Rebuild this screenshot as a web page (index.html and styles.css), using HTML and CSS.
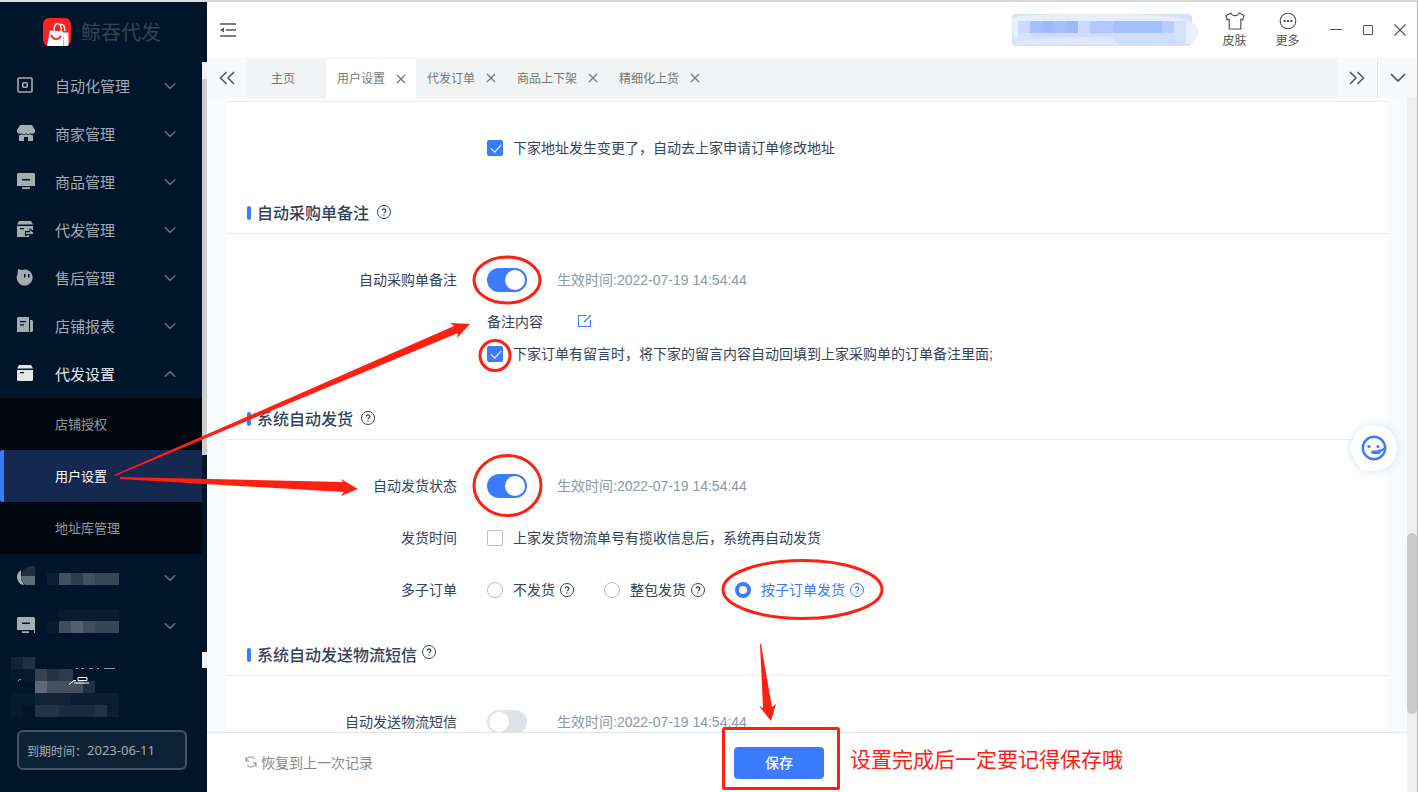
FILE: index.html
```html
<!DOCTYPE html>
<html lang="zh-CN">
<head>
<meta charset="utf-8">
<meta name="viewport" content="width=device-width, initial-scale=1">
<title>用户设置</title>
<link rel="stylesheet" href="styles.css">
</head>
<body>
<svg class="defs" aria-hidden="true">
  <symbol id="help" viewBox="0 0 14 14"><circle cx="7" cy="7" r="6.5" fill="none" stroke="currentColor"/><path d="M5.2 5.6a1.8 1.8 0 1 1 2.6 1.6c-.6.3-.8.6-.8 1.1" fill="none" stroke="currentColor" stroke-width="1.2"/><rect x="6.4" y="9.4" width="1.2" height="1.2" fill="currentColor"/></symbol>
  <symbol id="down" viewBox="0 0 12 12"><path d="M.8 3.2 6 8.4l5.200-5.200" fill="none" stroke="currentColor" stroke-width="1.6"/></symbol>
  <symbol id="close" viewBox="0 0 10 10"><path d="M1 1l8 8M9 1 1 9" fill="none" stroke="currentColor" stroke-width="1.300"/></symbol>
</svg>

<div class="app">
  <aside class="sidebar">
    <div class="brand">
      <svg width="28" height="28" viewBox="0 0 28 28" aria-hidden="true">
        <rect width="28" height="28" rx="6" fill="#ff2020"/>
        <path d="M20 14.500h5.500v11.700a4 4 0 0 1-1 1.800H21z" fill="#fff"/>
        <path d="M7 12.500 20 13.600 20.500 28H4z" fill="#fff"/>
        <path d="M11 13.500c0-5 1.500-8 4-8s3.500 3 3.300 8.500M16.500 7.500c2-2.500 5.500-1 5.200 5.500" fill="none" stroke="#fff" stroke-width="1.300"/>
        <path d="M8.500 17.500c1.500 4.500 7 4.800 9 .8" fill="none" stroke="#ff2020" stroke-width="1.800" stroke-linecap="round"/>
      </svg>
      <span class="brand-name">鲸吞代发</span>
    </div>
    <div class="menu-area">
      <nav class="menu">
        <button class="item" type="button">
          <svg class="ico" viewBox="0 0 18 18"><rect x="1" y="1" width="14" height="14" rx="1" fill="none" stroke="currentColor" stroke-width="1.600"/><rect x="5.800" y="5.800" width="4.400" height="4.400" rx="1" fill="none" stroke="currentColor" stroke-width="1.600"/></svg>
          <span>自动化管理</span><svg class="arrow"><use href="#down"/></svg>
        </button>
        <button class="item" type="button">
          <svg class="ico" viewBox="0 0 18 18"><path d="M3 0h12l3 5v2a3 3 0 0 1-4.500 1.200A3 3 0 0 1 9 8.200a3 3 0 0 1-4.500 0A3 3 0 0 1 0 7V5z" fill="currentColor"/><path d="M2 10.200q1.500 0 2.600-1 1.900 1.600 4.400 0 2.500 1.600 4.400 0 1.100 1 2.600 1V16h-5v-4H7v4H2z" fill="currentColor"/></svg>
          <span>商家管理</span><svg class="arrow"><use href="#down"/></svg>
        </button>
        <button class="item" type="button">
          <svg class="ico" viewBox="0 0 18 18"><path d="M1 0h16l1 1v12H0V1zM5 6v1.500h8V6zM5 14.200h8V16H5z" fill="currentColor" fill-rule="evenodd"/></svg>
          <span>商品管理</span><svg class="arrow"><use href="#down"/></svg>
        </button>
        <button class="item" type="button">
          <svg class="ico" viewBox="0 0 18 18"><path d="M2 0h12l2 3.500H0z" fill="currentColor"/><path d="M0 5h16v4.500L12.500 7v3H8v5h3v1H0zM3 7v1.200h4V7z" fill="currentColor" fill-rule="evenodd"/><path d="M9 11.200h4V9l3.500 3-1 1H9zM16 14.500h-4v2L9 14z" fill="currentColor"/></svg>
          <span>代发管理</span><svg class="arrow"><use href="#down"/></svg>
        </button>
        <button class="item" type="button">
          <svg class="ico" viewBox="0 0 18 18"><path d="M1 0l4 1a8 8 0 1 1-4.500 4zM7 5v3.500h1.500V5zM11 5v3.500h1.500V5z" fill="currentColor" fill-rule="evenodd"/></svg>
          <span>售后管理</span><svg class="arrow"><use href="#down"/></svg>
        </button>
        <button class="item" type="button">
          <svg class="ico" viewBox="0 0 18 18"><path d="M1 0h11v15H0V1zM3 4v1.200h6V4zM3 7.200v1.200h4V7.200zM13 3h2l1 1v10l-1 1h-2z" fill="currentColor" fill-rule="evenodd"/></svg>
          <span>店铺报表</span><svg class="arrow"><use href="#down"/></svg>
        </button>
        <button class="item open" type="button" aria-expanded="true">
          <svg class="ico" viewBox="0 0 18 18"><path d="M2 0h12l2 3.500H0zM0 5h16v10l-1 1H1l-1-1zM3 7v1.200h4V7z" fill="currentColor" fill-rule="evenodd"/></svg>
          <span>代发设置</span><svg class="arrow up"><use href="#down"/></svg>
        </button>
        <div class="submenu">
          <a href="#shop">店铺授权</a>
          <a href="#user" class="current">用户设置</a>
          <a href="#address">地址库管理</a>
        </div>
        <button class="item masked" type="button" aria-label="菜单">
          <svg class="ico" viewBox="0 0 18 18"><path d="M4 1Q-2 5 1 12q2 4 6 4L4 10z" fill="#a3abb3"/><path d="M4 7h14v9H8Q4 13 4 7" fill="#5e6b78"/><path d="M4 7Q5-1 13-3h5V7z" fill="#1d2f40"/></svg>
          <svg class="mosaic" viewBox="0 0 72 24" shape-rendering="crispEdges"><path fill="#0a1f33" d="M0 7h12v12H0z"/><path fill="#42505f" d="M12 7h12v12H12zM36 7h12v12H36z"/><path fill="#2c3b4d" d="M24 7h12v12H24z"/><path fill="#384756" d="M48 7h24v12H48z"/></svg>
          <svg class="arrow"><use href="#down"/></svg>
        </button>
        <button class="item masked" type="button" aria-label="菜单">
          <svg class="ico" viewBox="0 0 18 18"><path d="M1 0h16l1 1v15h-1v-3H0V1zM5 5.500v1.500h8V5.500zM5 14.200h7V16H5z" fill="#a3abb3" fill-rule="evenodd"/></svg>
          <svg class="mosaic" viewBox="0 0 72 24" shape-rendering="crispEdges"><path fill="#081b2e" d="M12-5h60V7H12zM0 7h12v12H0z"/><path fill="#3f4d5c" d="M12 7h12v12H12zM36 7h12v12H36z"/><path fill="#535f70" d="M24 7h12v12H24z"/><path fill="#374656" d="M48 7h24v12H48z"/></svg>
          <svg class="arrow"><use href="#down"/></svg>
        </button>
      </nav>
      <div class="side-scroll"><i></i></div>
    </div>
    <svg class="account" viewBox="0 0 120 80" aria-hidden="true">
      <g shape-rendering="crispEdges">
        <path fill="#112436" d="M11 7h12v12H11z"/><path fill="#203142" d="M23 7h12v12H23z"/>
        <path fill="#051a2d" d="M11 19h24v12H11zM11 43h24v12H11zM11 55h12v12H11z"/>
        <path fill="#354454" d="M35 19h12v12H35z"/><path fill="#223445" d="M47 19h12v12H47z"/><path fill="#2b3b4c" d="M59 19h14v12H59z"/>
        <path fill="#5e6a77" d="M35 31h12v12H35z"/><path fill="#435060" d="M47 31h36v12H47z"/><path fill="#1f3042" d="M83 31h12v12H83z"/>
        <path fill="#122436" d="M35 43h36v12H35z"/><path fill="#0a1d31" d="M71 43h48v12H71z"/>
        <path fill="#223344" d="M35 55h24v12H35z"/><path fill="#182b3b" d="M59 55h36v12H59z"/><path fill="#223144" d="M95 55h12v12H95z"/><path fill="#0a1d31" d="M107 55h12v12h-12z"/>
      </g>
      <path d="M76 18.500h2M81 18.500h3M89 18.500h4M97 18.500h2M104 18.500h11M18 31.500l1-2h2" stroke="#8a949d" fill="none"/>
      <path d="M69 34.500l5-4h2M78 27.500h9v3h-9zM74 33h15" stroke="#fff" fill="none"/>
    </svg>
    <div class="expiry">到期时间：<span>2023-06-11</span></div>
  </aside>

  <div class="main">
    <header class="topbar">
      <button class="plain" type="button" aria-label="收起菜单"><svg width="16" height="14" viewBox="0 0 16 14"><path d="M0 1h16M6 7h10M0 13h16" stroke="#555" stroke-width="1.400"/><path d="M0 7l4-2.500v5z" fill="#555"/></svg></button>
      <div class="top-right">
        <svg class="account-blur" viewBox="0 0 188 32" aria-hidden="true">
          <rect x="1" width="180" height="32" rx="4" fill="#d5e2fe"/>
          <path d="M0 12Q0 2 10 2Q90-3 150 2Q188 4 187 18Q186 30 175 30V7H7v18Q0 22 0 12" fill="#e7effe"/>
          <path d="M2 27Q40 23 100 23l8 8H6z" fill="#dfe9fe"/>
          <g shape-rendering="crispEdges"><path fill="#cbdafe" d="M7 7h12v12H7zM67 7h12v12H67z"/><path fill="#a5c0fe" d="M19 7h48v12H19z"/><path fill="#9dbafe" d="M31 7h12v12H31zM55 7h12v12H55z"/><path fill="#b0c8fe" d="M79 7h24v12H79z"/><path fill="#a5c0fe" d="M103 7h48v12h-48z"/><path fill="#b9cefe" d="M151 7h12v12h-12z"/><path fill="#d0defe" d="M19 19h60v4H19zM79 19h84v11h-55l-8-7H79z"/></g>
        </svg>
        <button class="tool" type="button"><svg width="20" height="18" viewBox="0 0 20 18"><path d="M6 1 1 3.500 2.200 8l2-.8V17h11.600V7.200l2 .8L19 3.500 14 1c-.5 3.500-7.500 3.500-8 0z" fill="none" stroke="#555" stroke-width="1.200" stroke-linejoin="round"/></svg>皮肤</button>
        <button class="tool" type="button"><svg width="20" height="18" viewBox="0 0 20 18"><circle cx="10" cy="9" r="7.800" fill="none" stroke="#555" stroke-width="1.100"/><path d="M5.500 8h2v2h-2zM9 8h2v2H9zM12.500 8h2v2h-2z" fill="#555"/></svg>更多</button>
        <div class="window-controls">
          <button class="plain" type="button" aria-label="最小化"><svg width="12" height="12" viewBox="0 0 12 12"><path d="M0 5.500h12" stroke="#555"/></svg></button>
          <button class="plain" type="button" aria-label="最大化"><svg width="12" height="12" viewBox="0 0 12 12"><path d="M1.500 1.500h9v9h-9z" fill="none" stroke="#555"/></svg></button>
          <button class="plain" type="button" aria-label="关闭"><svg width="12" height="12" viewBox="0 0 12 12"><path d="M.5.500l11 11M11.500.500l-11 11" stroke="#555" stroke-width="1.200"/></svg></button>
        </div>
      </div>
    </header>

    <div class="tabs">
      <button class="tab-nav" type="button" aria-label="向左"><svg width="16" height="14" viewBox="0 0 16 14"><path d="M7.500 1 1.500 7l6 6M15 1 9 7l6 6" fill="none" stroke="#555" stroke-width="1.500"/></svg></button>
      <button class="tab home" type="button">主页</button>
      <div class="tab active"><span>用户设置</span><button class="plain" type="button" aria-label="关闭标签"><svg class="x"><use href="#close"/></svg></button></div>
      <div class="tab"><span>代发订单</span><button class="plain" type="button" aria-label="关闭标签"><svg class="x"><use href="#close"/></svg></button></div>
      <div class="tab"><span>商品上下架</span><button class="plain" type="button" aria-label="关闭标签"><svg class="x"><use href="#close"/></svg></button></div>
      <div class="tab"><span>精细化上货</span><button class="plain" type="button" aria-label="关闭标签"><svg class="x"><use href="#close"/></svg></button></div>
      <button class="tab-nav last" type="button" aria-label="向右"><svg width="16" height="14" viewBox="0 0 16 14"><path d="M1 1l6 6-6 6M8.500 1l6 6-6 6" fill="none" stroke="#555" stroke-width="1.500"/></svg></button>
      <button class="tab-nav list" type="button" aria-label="标签列表"><svg width="16" height="10" viewBox="0 0 16 10"><path d="M1 1l7 7 7-7" fill="none" stroke="#555" stroke-width="1.700"/></svg></button>
    </div>

    <div class="workspace">
      <div class="pane">
        <main class="content">
          <div class="card">
            <section class="first">
              <div class="row"><span></span>
                <label class="choice"><input type="checkbox" class="check" checked>下家地址发生变更了，自动去上家申请订单修改地址</label>
              </div>
            </section>
            <section>
              <h2>自动采购单备注 <svg class="help"><use href="#help"/></svg></h2>
              <div class="row"><label for="remark">自动采购单备注</label>
                <div class="field"><input id="remark" type="checkbox" role="switch" class="switch" checked><span class="time">生效时间:2022-07-19 14:54:44</span></div>
              </div>
              <div class="row compact"><span></span>
                <div class="remark"><span>备注内容</span><button class="plain" type="button" aria-label="编辑"><svg width="14" height="14" viewBox="0 0 14 14"><path d="M8.500 1.500h-8v11h12V6" fill="none" stroke="#3b7cff" stroke-width="1.200"/><path d="M6 8l7-7" stroke="#3b7cff" stroke-width="1.200"/></svg></button></div>
              </div>
              <div class="row compact end"><span></span>
                <label class="choice"><input type="checkbox" class="check" checked>下家订单有留言时，将下家的留言内容自动回填到上家采购单的订单备注里面;</label>
              </div>
            </section>
            <section>
              <h2>系统自动发货 <svg class="help"><use href="#help"/></svg></h2>
              <div class="row"><label for="ship">自动发货状态</label>
                <div class="field"><input id="ship" type="checkbox" role="switch" class="switch" checked><span class="time">生效时间:2022-07-19 14:54:44</span></div>
              </div>
              <div class="row"><span>发货时间</span>
                <label class="choice"><input type="checkbox" class="check">上家发货物流单号有揽收信息后，系统再自动发货</label>
              </div>
              <div class="row"><span>多子订单</span>
                <div class="radios">
                  <label class="choice"><input type="radio" name="sub" class="radio">不发货<svg class="help"><use href="#help"/></svg></label>
                  <label class="choice"><input type="radio" name="sub" class="radio">整包发货<svg class="help"><use href="#help"/></svg></label>
                  <label class="choice chosen"><input type="radio" name="sub" class="radio" checked>按子订单发货<svg class="help"><use href="#help"/></svg></label>
                </div>
              </div>
            </section>
            <section>
              <h2 class="tight">系统自动发送物流短信 <svg class="help"><use href="#help"/></svg></h2>
              <div class="row"><label for="sms">自动发送物流短信</label>
                <div class="field"><input id="sms" type="checkbox" role="switch" class="switch"><span class="time">生效时间:2022-07-19 14:54:44</span></div>
              </div>
            </section>
          </div>
        </main>
        <footer class="actions">
          <div class="restore"><button class="plain" type="button"><svg width="12" height="12" viewBox="0 0 12 12"><path d="M1 5a5 5 0 0 1 9-2M11 7a5 5 0 0 1-9 2M1 1v4h3M11 11V7H8" fill="none" stroke="#888"/></svg>恢复到上一次记录</button></div>
          <button class="save" type="button">保存</button>
        </footer>
      </div>
      <div class="scrollbar"><i></i></div>
    </div>
  </div>

  <button class="chat" type="button" aria-label="在线客服">
    <svg width="60" height="60" viewBox="0 0 60 60"><path d="M30 7a23 23 0 1 1 0 46H15l2-4A23 23 0 0 1 30 7z" fill="#fff"/><circle cx="30" cy="30" r="11.200" fill="none" stroke="#3b7cff" stroke-width="2.400"/><circle cx="25" cy="28.500" r="1.600" fill="#3b7cff"/><circle cx="34" cy="28.500" r="1.600" fill="#3b7cff"/><path d="M41 30q-3 3-7 3" fill="none" stroke="#3b7cff" stroke-width="2"/><path d="M29 34.300h6" stroke="#3b7cff" stroke-width="3.400" stroke-linecap="round"/></svg>
  </button>

  <svg class="marks" aria-hidden="true">
    <g fill="none" stroke="#ff2012" stroke-width="3">
      <ellipse cx="507" cy="280" rx="33" ry="23"/>
      <circle cx="495" cy="355.500" r="15"/>
      <ellipse cx="507.500" cy="485.500" rx="33.500" ry="30"/>
      <ellipse cx="802.500" cy="589.500" rx="79.500" ry="29"/>
      <rect x="723.500" y="728.500" width="115" height="60" rx="1"/>
    </g>
    <g fill="#ff2012">
      <path d="M114 475 454 326l-4-3 20 1-13 14 1-5L115 476z"/>
      <path d="M120 477l223 5-2-3 17 10-17 7 3-4-224-13z"/>
      <path d="M760 644h1l11 63 4-3-5 17-12-15 4 2z"/>
    </g>
  </svg>
  <p class="note">设置完成后一定要记得保存哦</p>
</div>
</body>
</html>
```

FILE: styles.css
```css
* { box-sizing: border-box; }

body {
  margin: 0;
  font-family: "Liberation Sans", "Noto Sans CJK SC", sans-serif;
  font-size: 14px;
  color: #34425a;
  background: #fff;
}

button {
  font: inherit;
  color: inherit;
  border: 0;
  background: none;
  padding: 0;
  cursor: pointer;
}

svg { display: block; flex: none; }
input { margin: 0; flex: none; }
.defs { position: absolute; width: 0; height: 0; }
.plain { display: flex; align-items: center; }

.app {
  position: relative;
  display: flex;
  height: 100vh;
  overflow: hidden;
  border-top: 2px solid #dadada;
  border-right: 1px solid #b8b8b8;
}

/* Sidebar */
.sidebar {
  width: 207px;
  flex: none;
  display: flex;
  flex-direction: column;
  background: #001529;
  color: #a3abb3;
}

.brand {
  height: 60px;
  flex: none;
  display: flex;
  align-items: center;
  gap: 10px;
  padding-left: 43px;
}

.brand-name {
  padding-bottom: 2px;
  font-size: 20px;
  font-weight: 400;
  color: #344252;
}

.menu-area { display: flex; height: 606px; flex: none; margin-bottom: -18px; }
.menu { flex: 1; }

.item {
  width: 100%;
  height: 48px;
  display: grid;
  grid-template-columns: 18px 89px 12px;
  align-items: center;
  column-gap: 20px;
  padding-left: 17px;
  font-size: 15px;
  text-align: left;
}

.item span { padding-bottom: 2px; }
.item.masked { grid-template-columns: 18px 96px 12px; column-gap: 12px; }
.item.masked .arrow { margin-left: 9px; }
.item.open { color: #e6e9ec; }
.ico { width: 18px; height: 18px; overflow: visible; }
.mosaic { width: 72px; height: 24px; overflow: visible; }
.arrow { width: 12px; height: 12px; color: #5f6c79; }
.arrow.up { transform: rotate(180deg); }

.submenu { background: #00070e; }

.submenu a {
  display: flex;
  align-items: center;
  height: 52px;
  padding: 0 0 2px 51px;
  border-left: 4px solid transparent;
  font-size: 13px;
  color: #969a9e;
  text-decoration: none;
}

.submenu .current {
  background: #142850;
  border-left-color: #3b7cff;
  border-radius: 3px 0 0 3px;
  color: #fff;
}

.side-scroll {
  width: 5px;
  display: flex;
  flex-direction: column;
  padding-top: 17px;
  background: linear-gradient(#f0f0f0 0 17px, #001529 17px 590px, #f0f0f0 590px);
}

.side-scroll i { height: 376px; background: #cdcdcd; }

.account { width: 120px; height: 80px; }

.expiry {
  display: flex;
  align-items: center;
  width: 170px;
  height: 40px;
  margin-left: 17px;
  padding-left: 8px;
  border: 2px solid #43525f;
  border-radius: 6px;
  background: #0d2234;
  font-size: 12px;
}

.expiry span { font-family: "Noto Sans", sans-serif; font-size: 13px; }

/* Top bar */
.main { flex: 1; min-width: 0; display: flex; flex-direction: column; }

.topbar {
  height: 56px;
  flex: none;
  display: flex;
  align-items: center;
  justify-content: space-between;
  padding: 0 11px 0 13px;
}

.top-right { display: flex; align-items: center; }
.account-blur { width: 188px; height: 32px; margin-right: 23px; }

.tool {
  display: flex;
  flex-direction: column;
  align-items: center;
  gap: 2px;
  width: 25px;
  margin-right: 28px;
  padding-top: 2px;
  font-size: 12px;
  line-height: 18px;
  color: #555;
  white-space: nowrap;
}

.window-controls { display: flex; gap: 20px; margin-left: 2px; }

/* Tabs */
.tabs {
  height: 40px;
  flex: none;
  display: flex;
  background: #f2f3f5;
  font-size: 12px;
  color: #777;
}

.tab { display: flex; align-items: center; gap: 11px; padding: 0 10px 0 11px; }
.tab span { padding-bottom: 2px; }
.tab.home { padding: 0 31px 2px 24px; }
.tab.active { background: #fff; border-top: 1px solid #f2f3f5; }
.x { width: 10px; height: 10px; }

.tab-nav {
  width: 40px;
  flex: none;
  display: flex;
  align-items: center;
  justify-content: center;
  background: #f7f8fa;
}

.tab-nav.last { margin-left: auto; }
.tab-nav.list { border-left: 1px solid #e4e6e9; }

/* Settings */
.workspace { flex: 1; min-height: 0; display: flex; }
.pane { flex: 1; min-width: 0; display: flex; flex-direction: column; }

.content {
  flex: 1;
  min-height: 0;
  overflow: hidden;
  padding: 0 20px;
  background: #f8fafc;
}

.card { background: #fff; }
section { padding-bottom: 20px; }
.first { padding-top: 3px; }
.first .row { border-top: 1px solid #e8eaec; padding-top: 18px; height: 72px; }

h2 {
  display: flex;
  align-items: center;
  gap: 8px;
  height: 41px;
  margin: 0 0 19px;
  padding: 0 0 2px 20px;
  border-bottom: 1px solid #e8eaec;
  font-size: 16px;
  font-weight: 500;
}

h2::before {
  content: "";
  width: 4px;
  height: 14px;
  margin: 2px -2px 0 0;
  border-radius: 2px;
  background: #3b7cff;
}

.help { width: 14px; height: 14px; }
.tight .help { margin: -4px 0 0 -3px; }

.row {
  display: grid;
  grid-template-columns: 230px 1fr;
  column-gap: 30px;
  align-items: center;
  height: 52px;
}

.row > :first-child { text-align: right; }
.row.compact { height: 32px; }
.row.end { margin-bottom: 30px; }
section:has(.end) { padding-bottom: 0; }

.field { display: flex; align-items: center; gap: 30px; }
.time { color: #8a98ab; }
.remark { display: flex; align-items: center; gap: 35px; }
.choice { display: flex; align-items: center; white-space: nowrap; }
.choice input { margin: 2px 10px 0 0; }
.choice .help { margin: 2px 0 0 5px; }
.radios { display: flex; gap: 30px; }
.chosen { color: #3b7cff; }

.check, .radio {
  appearance: none;
  width: 16px;
  height: 16px;
  border: 1px solid #b3bccb;
  border-radius: 2px;
  background: #fff;
}

.check:checked { border-color: #3b7cff; background: #3b7cff; }

.check:checked::after {
  content: "";
  display: block;
  width: 5px;
  height: 9px;
  margin: 1px 0 0 5px;
  border: solid #fff;
  border-width: 0 1px 1px 0;
  transform: rotate(42deg);
}

.radio { border-radius: 50%; }
.radio:checked { border: 4px solid #3b7cff; }

.switch {
  appearance: none;
  width: 40px;
  height: 24px;
  margin-top: 2px;
  padding: 2px;
  border-radius: 12px;
  background: #dfe2ea;
}

.switch::before {
  content: "";
  display: block;
  width: 20px;
  height: 20px;
  border-radius: 50%;
  background: #fff;
}

.switch:checked { background: #3b7cff; }
.switch:checked::before { margin-left: 16px; }

.actions {
  height: 60px;
  flex: none;
  display: flex;
  align-items: center;
  padding-left: 38px;
  border-top: 1px solid #e4e7ec;
}

.restore { width: 489px; padding-bottom: 2px; color: #888; }
.restore .plain { gap: 4px; }

.save {
  width: 90px;
  height: 32px;
  padding-bottom: 2px;
  border-radius: 4px;
  background: #3b7cff;
  color: #fff;
  font-weight: 500;
}

.scrollbar {
  width: 10px;
  padding-top: 435px;
  background: #f0f0f0;
}

.scrollbar i { display: block; height: 181px; border-radius: 5px; background: #cacaca; }

/* Floating layers */
.chat {
  position: absolute;
  right: 13px;
  top: 416px;
  filter: drop-shadow(0 0 4px #d3e0fb);
}

.marks {
  position: absolute;
  left: 0;
  top: -2px;
  width: 100%;
  height: 100vh;
  pointer-events: none;
}

.note {
  position: absolute;
  left: 850px;
  top: 742px;
  margin: 0;
  font-size: 21px;
  line-height: 32px;
  color: #ff2012;
}
```
